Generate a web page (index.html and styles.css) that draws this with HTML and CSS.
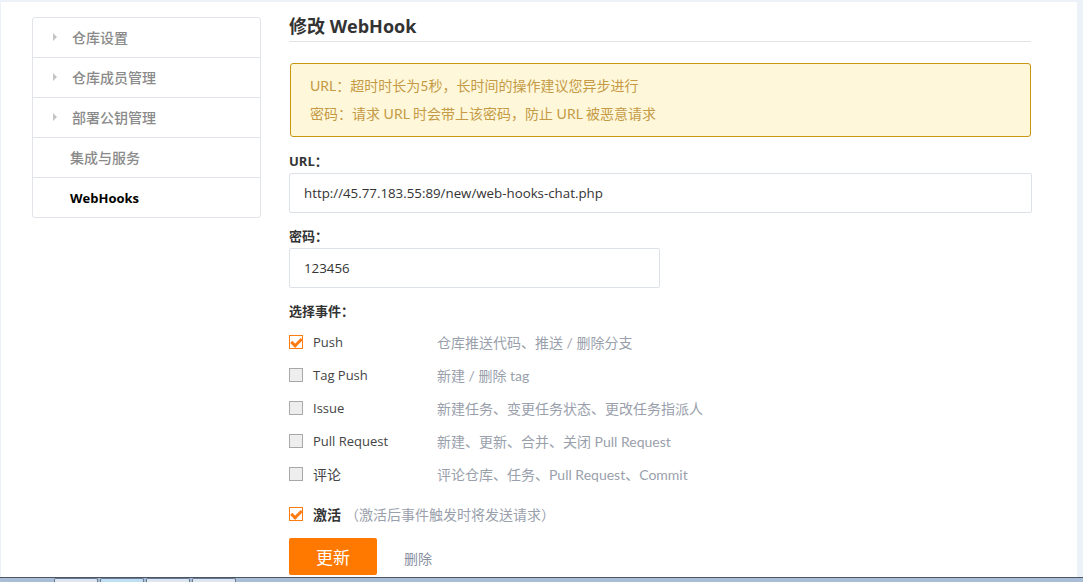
FILE: index.html
```html
<!DOCTYPE html>
<html lang="zh-CN">
<head>
<meta charset="utf-8">
<title>修改 WebHook</title>
<link rel="stylesheet" href="styles.css">
</head>
<body>
<div class="frame">
  <div class="page">
    <nav class="sidenav">
      <a class="nav-item has-arrow"><span class="arrow"></span>仓库设置</a>
      <a class="nav-item has-arrow"><span class="arrow"></span>仓库成员管理</a>
      <a class="nav-item has-arrow"><span class="arrow"></span>部署公钥管理</a>
      <a class="nav-item">集成与服务</a>
      <a class="nav-item active">WebHooks</a>
    </nav>
    <main class="content">
      <h1 class="title">修改 WebHook</h1>
      <div class="alert">
        <p>URL：超时时长为5秒，长时间的操作建议您异步进行</p>
        <p>密码：请求 URL 时会带上该密码，防止 URL 被恶意请求</p>
      </div>
      <label class="field-label">URL：</label>
      <div class="input wide">http://45.77.183.55:89/new/web-hooks-chat.php</div>
      <label class="field-label">密码：</label>
      <div class="input narrow">123456</div>
      <label class="field-label">选择事件：</label>
      <ul class="events">
        <li class="event"><span class="cb checked"></span><span class="ev-name">Push</span><span class="ev-desc">仓库推送代码、推送 / 删除分支</span></li>
        <li class="event"><span class="cb"></span><span class="ev-name">Tag Push</span><span class="ev-desc">新建 / 删除 tag</span></li>
        <li class="event"><span class="cb"></span><span class="ev-name">Issue</span><span class="ev-desc">新建任务、变更任务状态、更改任务指派人</span></li>
        <li class="event"><span class="cb"></span><span class="ev-name">Pull Request</span><span class="ev-desc">新建、更新、合并、关闭 Pull Request</span></li>
        <li class="event"><span class="cb"></span><span class="ev-name cjk">评论</span><span class="ev-desc">评论仓库、任务、Pull Request、Commit</span></li>
      </ul>
      <div class="activate"><span class="cb checked"></span><strong>激活</strong><span class="hint">（激活后事件触发时将发送请求）</span></div>
      <div class="actions">
        <button class="btn-primary">更新</button>
        <a class="link-delete">删除</a>
      </div>
    </main>
  </div>
  <div class="scroll-strip"></div>
</div>
<div class="taskbar">
  <span class="tab"></span><span class="tab active"></span><span class="tab"></span><span class="tab"></span>
</div>
</body>
</html>
```
FILE: styles.css
```css
* { box-sizing: border-box; }
html, body { margin: 0; padding: 0; }
body {
  background: #edf1f8;
  font-family: "Open Sans", "Noto Sans CJK SC", sans-serif;
  font-size: 13px;
  color: #333;
  width: 1083px;
  height: 582px;
  overflow: hidden;
}
.frame {
  display: flex;
  height: 577px;
  padding: 2px 0 0 1px;
}
.page {
  width: 1076px;
  height: 575px;
  background: #fff;
  display: flex;
  padding-left: 31px;
  overflow: hidden;
}
.scroll-strip { flex: 1; }

.sidenav {
  width: 229px;
  margin-top: 15px;
  align-self: flex-start;
  border: 1px solid #e1e4e8;
  border-radius: 3px;
  display: flex;
  flex-direction: column;
}
.nav-item {
  height: 40px;
  display: flex;
  align-items: center;
  padding-left: 37px;
  padding-bottom: 2px;
  color: #8a8a8a;
  font-family: "Lato", "Noto Sans CJK SC", sans-serif;
  font-weight: 500;
  font-size: 14px;
  border-bottom: 1px solid #e1e4e8;
  position: relative;
}
.nav-item:last-child { border-bottom: 0; height: 39px; }
.nav-item.has-arrow { padding-left: 39px; }
.arrow {
  position: absolute;
  left: 20px;
  top: 15px;
  width: 0; height: 0;
  border-left: 4px solid #c4c4c4;
  border-top: 4px solid transparent;
  border-bottom: 4px solid transparent;
}
.nav-item.active {
  color: #000;
  font-weight: 700;
  font-family: "Open Sans", sans-serif;
  font-size: 13px;
  padding-bottom: 0;
}

.content {
  width: 742px;
  margin-left: 28px;
  padding-top: 12px;
}
.title {
  margin: 0;
  font-size: 18px;
  line-height: 24px;
  font-weight: 700;
  color: #333;
  padding-bottom: 3px;
  border-bottom: 1px solid #e3e3e3;
}
.alert {
  margin: 21px 0 0 1px;
  background: #fff7da;
  border: 1px solid #c8960f;
  border-radius: 3px;
  padding: 8px 19px 8px;
  color: #c49a45;
  font-family: "Lato", "Noto Sans CJK SC", sans-serif;
  font-size: 14px;
}
.alert p { margin: 0; line-height: 28px; }

.field-label {
  display: block;
  margin-top: 14px;
  line-height: 20px;
  font-size: 13px;
  font-weight: 700;
  color: #333;
}
.field-label + .input { margin-top: 2px; }
.input {
  height: 40px;
  border: 1px solid #dde2e8;
  border-radius: 2px;
  display: flex;
  align-items: center;
  padding-left: 14px;
  font-size: 13.3px;
  color: #333;
}
.input.wide { width: 743px; }
.input.narrow { width: 371px; }
.input + .field-label { margin-top: 13px; }

.events { list-style: none; margin: 4px 0 0; padding: 0; }
.event, .activate {
  height: 33px;
  display: flex;
  align-items: center;
}
.cb {
  width: 14px;
  height: 14px;
  border: 1px solid #a9a9a9;
  background: #eeeeee;
  flex: none;
  position: relative;
}
.cb.checked {
  border-color: #ff7c12;
  background: #fff;
}
.cb.checked::after {
  content: "";
  position: absolute;
  left: 3px;
  top: 0px;
  width: 4px;
  height: 8px;
  border-right: 3px solid #ff7c12;
  border-bottom: 3px solid #ff7c12;
  transform: rotate(45deg);
}
.ev-name {
  width: 124px;
  margin-left: 10px;
  color: #444;
}
.ev-name.cjk { font-size: 14px; }
.ev-desc, .hint {
  color: #9a9fac;
  font-family: "Lato", "Noto Sans CJK SC", sans-serif;
  font-size: 14px;
}

.activate { margin-top: 7px; }
.activate strong { margin-left: 10px; font-size: 14px; color: #333; }
.hint { margin-left: 4px; }

.actions {
  margin-top: 8px;
  display: flex;
  align-items: center;
}
.btn-primary {
  width: 88px;
  height: 37px;
  background: #ff7800;
  border: 0;
  border-radius: 2px;
  color: #fff;
  font-family: "Noto Sans CJK SC", sans-serif;
  font-size: 17px;
  padding: 0;
}
.link-delete {
  margin-left: 27px;
  color: #8a90a2;
  font-family: "Noto Sans CJK SC", sans-serif;
  font-size: 14px;
  padding-top: 2px;
}

.taskbar {
  height: 5px;
  border-top: 1px solid #4a5566;
  background: #a9bdd6;
  display: flex;
  padding-left: 54px;
  gap: 2px;
}
.tab {
  width: 44px;
  height: 4px;
  background: #dde6f1;
  border: 1px solid #6a7a90;
  border-bottom: 0;
  border-radius: 2px 2px 0 0;
}
.tab.active { background: #bfe0f4; }
```
